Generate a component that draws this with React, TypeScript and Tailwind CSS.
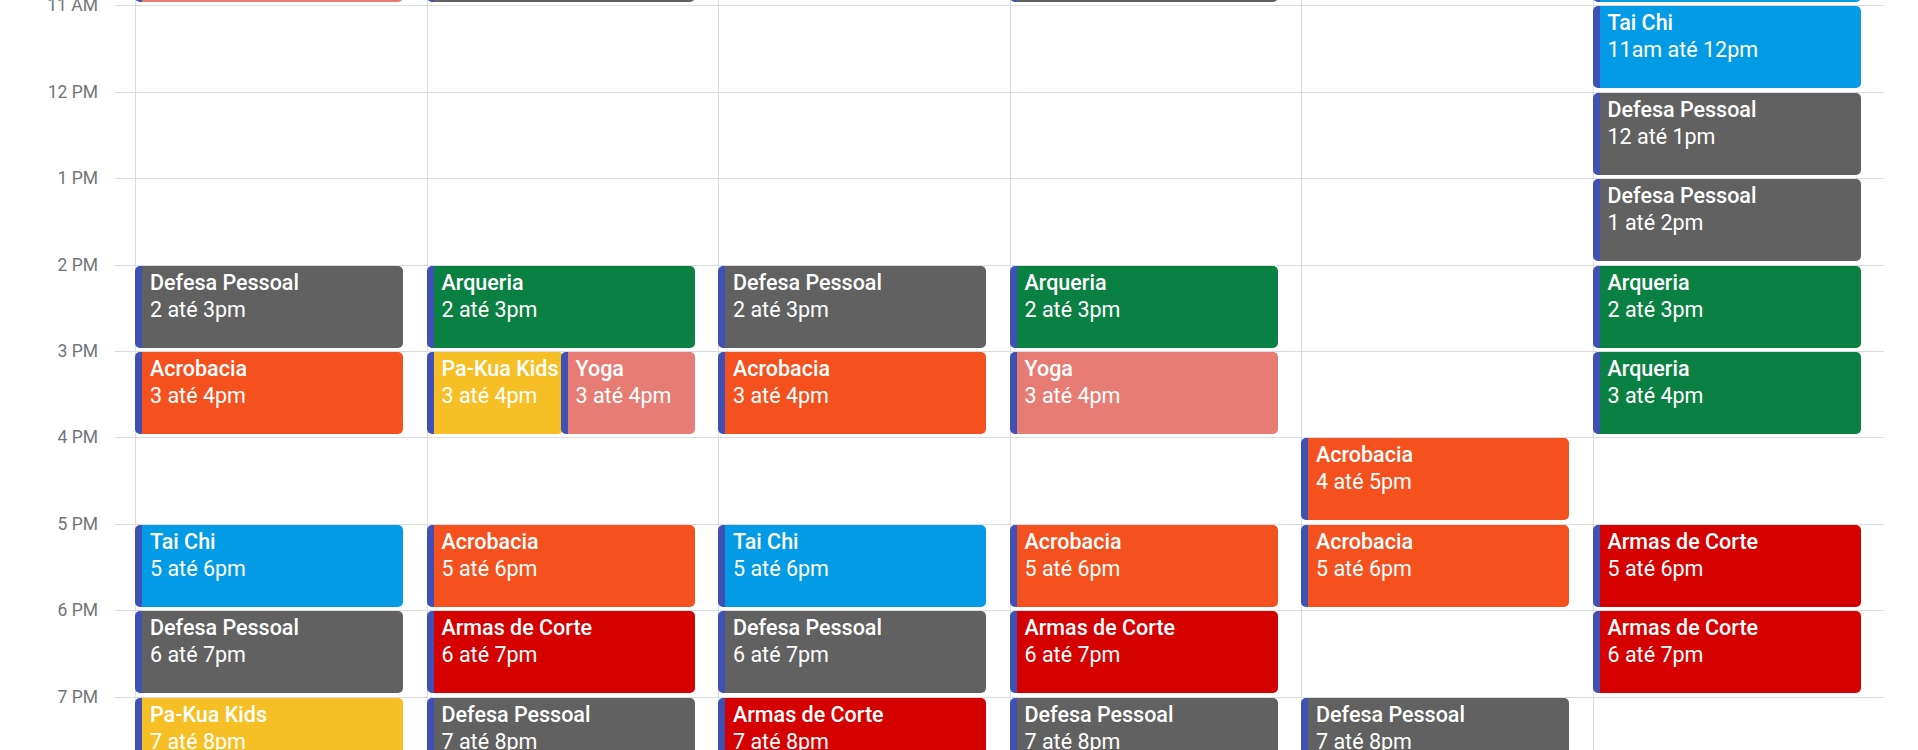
type Ev = { title: string; time: string; color: string };

const gray = "bg-[#616161]";
const orange = "bg-[#f4511e]";
const green = "bg-[#0b8043]";
const blue = "bg-[#039be5]";
const red = "bg-[#d50000]";
const yellow = "bg-[#f6bf26]";
const pink = "bg-[#e67c73]";

const hours = ["10 AM", "11 AM", "12 PM", "1 PM", "2 PM", "3 PM", "4 PM", "5 PM", "6 PM", "7 PM"];

const times = [
  "10 até 11am",
  "11am até 12pm",
  "12 até 1pm",
  "1 até 2pm",
  "2 até 3pm",
  "3 até 4pm",
  "4 até 5pm",
  "5 até 6pm",
  "6 até 7pm",
  "7 até 8pm",
];

const ev = (title: string, color: string, slot: number): Ev => ({ title, color, time: times[slot] });

// each day: slot index -> one event or a pair sharing the hour
const days: Record<number, Ev[]>[] = [
  {
    0: [ev("Yoga", pink, 0)],
    4: [ev("Defesa Pessoal", gray, 4)],
    5: [ev("Acrobacia", orange, 5)],
    7: [ev("Tai Chi", blue, 7)],
    8: [ev("Defesa Pessoal", gray, 8)],
    9: [ev("Pa-Kua Kids", yellow, 9)],
  },
  {
    0: [ev("Defesa Pessoal", gray, 0)],
    4: [ev("Arqueria", green, 4)],
    5: [ev("Pa-Kua Kids", yellow, 5), ev("Yoga", pink, 5)],
    7: [ev("Acrobacia", orange, 7)],
    8: [ev("Armas de Corte", red, 8)],
    9: [ev("Defesa Pessoal", gray, 9)],
  },
  {
    4: [ev("Defesa Pessoal", gray, 4)],
    5: [ev("Acrobacia", orange, 5)],
    7: [ev("Tai Chi", blue, 7)],
    8: [ev("Defesa Pessoal", gray, 8)],
    9: [ev("Armas de Corte", red, 9)],
  },
  {
    0: [ev("Defesa Pessoal", gray, 0)],
    4: [ev("Arqueria", green, 4)],
    5: [ev("Yoga", pink, 5)],
    7: [ev("Acrobacia", orange, 7)],
    8: [ev("Armas de Corte", red, 8)],
    9: [ev("Defesa Pessoal", gray, 9)],
  },
  {
    6: [ev("Acrobacia", orange, 6)],
    7: [ev("Acrobacia", orange, 7)],
    9: [ev("Defesa Pessoal", gray, 9)],
  },
  {
    0: [ev("Tai Chi", blue, 0)],
    1: [ev("Tai Chi", blue, 1)],
    2: [ev("Defesa Pessoal", gray, 2)],
    3: [ev("Defesa Pessoal", gray, 3)],
    4: [ev("Arqueria", green, 4)],
    5: [ev("Arqueria", green, 5)],
    7: [ev("Armas de Corte", red, 7)],
    8: [ev("Armas de Corte", red, 8)],
  },
];

function EventCard({ e, width }: { e: Ev; width: string }) {
  return (
    <div
      className={`h-[82px] ${width} shrink-0 overflow-hidden rounded-[5px] border-l-[7px] border-[#3f51b5] pl-[8px] pt-[3px] text-white ${e.color}`}
    >
      <div className="whitespace-nowrap text-[21.5px] font-medium leading-[27px]">{e.title}</div>
      <div className="whitespace-nowrap text-[21.5px] leading-[27px]">{e.time}</div>
    </div>
  );
}

function Slot({ items }: { items?: Ev[] }) {
  return (
    <div className="h-[86.4px] border-t border-[#dadce0]">
      {items && items.length === 1 && (
        <div className="ml-[-1px]">
          <EventCard e={items[0]} width="w-[268px]" />
        </div>
      )}
      {items && items.length === 2 && (
        <div className="ml-[-1px] flex w-[268px]">
          <EventCard e={items[0]} width="w-[136px]" />
          <div className="ml-[-2px]">
            <EventCard e={items[1]} width="w-[134px]" />
          </div>
        </div>
      )}
    </div>
  );
}

export default function App() {
  return (
    <div className="h-[750px] w-full overflow-hidden bg-white font-[Roboto,sans-serif]">
      <div className="mt-[-81px] flex">
        <div className="w-[135px] shrink-0">
          {hours.map((h) => (
            <div key={h} className="flex h-[86.4px] items-start">
              <span className="mt-[-12px] w-[98px] text-right text-[17.5px] leading-[24px] text-[#70757a]">
                {h}
              </span>
              <div className="ml-[17px] h-0 w-[20px] border-t border-[#dadce0]" />
            </div>
          ))}
        </div>
        {days.map((d, i) => (
          <div key={i} className="w-[291.5px] shrink-0 border-l border-[#dadce0]">
            {hours.map((h, s) => (
              <Slot key={h} items={d[s]} />
            ))}
          </div>
        ))}
      </div>
    </div>
  );
}
